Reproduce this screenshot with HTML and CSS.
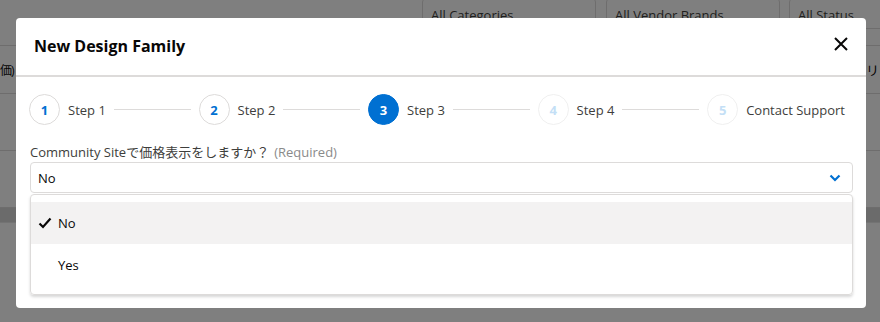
FILE: index.html
```html
<!DOCTYPE html>
<html lang="en">
<head>
    <meta charset="UTF-8" />
    <title>New Design Family</title>
    <link rel="stylesheet" href="styles.css">
</head>
<body>

    <!-- Page behind the modal -->
    <div class="page">
        <div class="filters">
            <div class="filter filter-cat">All Categories</div>
            <div class="filter filter-brand">All Vendor Brands</div>
            <div class="filter filter-status">All Status</div>
        </div>
        <div class="grid-head"></div>
        <div class="grid-row">
            <div class="cell-left">価)</div>
            <div class="cell-right">リア</div>
        </div>
        <div class="grid-row grid-row-tall"></div>
        <div class="grid-row grid-row-tall"></div>
        <div class="hscroll"></div>
    </div>

    <!-- Modal -->
    <div class="backdrop">
        <div class="modal">
            <div class="modal-header">
                <div class="modal-title">New Design Family</div>
                <span class="close">
                    <svg width="14" height="14" viewBox="0 0 14 14">
                        <path d="M1 1 L13 13 M13 1 L1 13" stroke="#080707" stroke-width="2" fill="none"/>
                    </svg>
                </span>
            </div>

            <div class="modal-body">
                <!-- Stepper -->
                <div class="stepper">
                    <div class="step done">
                        <span class="step-num">1</span>
                        <span class="step-label">Step 1</span>
                        <span class="step-line"></span>
                    </div>
                    <div class="step done">
                        <span class="step-num">2</span>
                        <span class="step-label">Step 2</span>
                        <span class="step-line"></span>
                    </div>
                    <div class="step active">
                        <span class="step-num">3</span>
                        <span class="step-label">Step 3</span>
                        <span class="step-line"></span>
                    </div>
                    <div class="step todo">
                        <span class="step-num">4</span>
                        <span class="step-label">Step 4</span>
                        <span class="step-line"></span>
                    </div>
                    <div class="step todo last">
                        <span class="step-num">5</span>
                        <span class="step-label">Contact Support</span>
                    </div>
                </div>

                <!-- Field -->
                <div class="field-label">Community Siteで価格表示をしますか？<span class="required">(Required)</span></div>
                <div class="combo">
                    <span>No</span>
                    <svg class="chevron" width="12" height="8" viewBox="0 0 12 8">
                        <path d="M1.5 1.5 L6 6 L10.5 1.5" stroke="#0070d2" stroke-width="2.2" fill="none"/>
                    </svg>
                </div>
                <div class="listbox">
                    <div class="option selected">
                        <svg class="check" width="14" height="12" viewBox="0 0 14 12">
                            <path d="M1.5 6.5 L5 10 L12.5 1.5" stroke="#080707" stroke-width="2.2" fill="none"/>
                        </svg>
                        <span>No</span>
                    </div>
                    <div class="option">
                        <span class="check"></span>
                        <span>Yes</span>
                    </div>
                </div>
            </div>
        </div>
    </div>

</body>
</html>
```

FILE: styles.css
```css
body {
    font-family: 'Open Sans', 'Noto Sans CJK JP', sans-serif;
    margin: 0;
    padding: 0;
    background-color: #ffffff;
    color: #3e3e3c;
    overflow: hidden;
}

/* Page behind */
.page {
    width: 880px;
    height: 322px;
    padding-top: 1px;
    box-sizing: border-box;
}

.filters {
    display: flex;
    padding-left: 422px;
    margin-top: -3px;
}

.filter {
    flex: none;
    height: 31px;
    box-sizing: border-box;
    border: 1px solid #dddbda;
    border-radius: 4px;
    padding: 7px 0 0 8px;
    font-size: 13px;
    color: #3e3e3c;
    margin-right: 10px;
}

.filter-cat { width: 174px; }
.filter-brand { width: 174px; margin-right: 9px; }
.filter-status { width: 110px; margin-right: 0; }

.grid-head {
    height: 17px;
    box-sizing: border-box;
    border-bottom: 1px solid #dddbda;
}

.grid-row {
    height: 48px;
    box-sizing: border-box;
    border-bottom: 1px solid #dddbda;
    display: flex;
    justify-content: space-between;
    align-items: center;
    font-size: 13px;
    color: #080707;
}

.grid-row-tall {
    height: 57px;
}

.cell-left {
    font-size: 12px;
    letter-spacing: -1px;
    white-space: nowrap;
}

.cell-right {
    width: 14px;
    white-space: nowrap;
}

.hscroll {
    height: 14px;
    background-color: #d6d6d6;
    border-bottom: 1px solid #e6e6e6;
}

/* Modal */
.backdrop {
    position: fixed;
    top: 0;
    left: 0;
    width: 100%;
    height: 100%;
    background-color: rgba(0, 0, 0, 0.5);
    padding: 18px 14px 0 16px;
    box-sizing: border-box;
}

.modal {
    background-color: #ffffff;
    border-radius: 4px;
}

.modal-header {
    height: 57px;
    border-bottom: 2px solid #dddbda;
    display: flex;
    align-items: center;
    justify-content: space-between;
    padding: 0 18px 0 18px;
}

.modal-title {
    font-size: 16px;
    font-weight: bold;
    color: #080707;
    margin-top: -2px;
}

.close {
    display: flex;
    margin-top: -6px;
    cursor: pointer;
}

.modal-body {
    padding: 17px 13px 13px 13px;
}

/* Stepper */
.stepper {
    display: flex;
    align-items: center;
    margin-right: 8px;
}

.step {
    flex: 1;
    display: flex;
    align-items: center;
}

.step.last {
    flex: none;
}

.step-num {
    width: 31px;
    height: 31px;
    box-sizing: border-box;
    border-radius: 50%;
    border: 1px solid #dddbda;
    display: flex;
    align-items: center;
    justify-content: center;
    font-size: 13px;
    font-weight: bold;
    color: #0070d2;
    flex: none;
}

.step.active .step-num {
    background-color: #0070d2;
    border-color: #0070d2;
    color: #ffffff;
}

.step.todo .step-num {
    border-color: #f0f0f0;
    color: #c4dff6;
}

.step-label {
    font-size: 13px;
    color: #3e3e3c;
    margin-left: 8px;
    white-space: nowrap;
}

.step-line {
    flex: 1;
    height: 1px;
    background-color: #dddbda;
    margin: 0 8px;
}

/* Field */
.field-label {
    margin-top: 19px;
    font-size: 13px;
    line-height: 16px;
    color: #3e3e3c;
    padding-left: 1px;
}

.required {
    color: #8a8a8a;
    margin-left: 5px;
}

.combo {
    margin-top: 2px;
    margin-left: 1px;
    height: 31px;
    box-sizing: border-box;
    border: 1px solid #dddbda;
    border-radius: 4px;
    display: flex;
    align-items: center;
    justify-content: space-between;
    padding: 0 11px 0 7px;
    font-size: 13px;
    color: #080707;
}

.listbox {
    margin-top: 1px;
    margin-left: 1px;
    border: 1px solid #dddbda;
    border-radius: 4px;
    padding: 7px 0 8px;
    box-shadow: 0 2px 3px rgba(0, 0, 0, 0.16);
}

.option {
    height: 42px;
    display: flex;
    align-items: center;
    padding-left: 7px;
    font-size: 13px;
    color: #080707;
}

.option.selected {
    background-color: #f3f2f2;
}

.check {
    width: 14px;
    margin-right: 6px;
    flex: none;
}
```
